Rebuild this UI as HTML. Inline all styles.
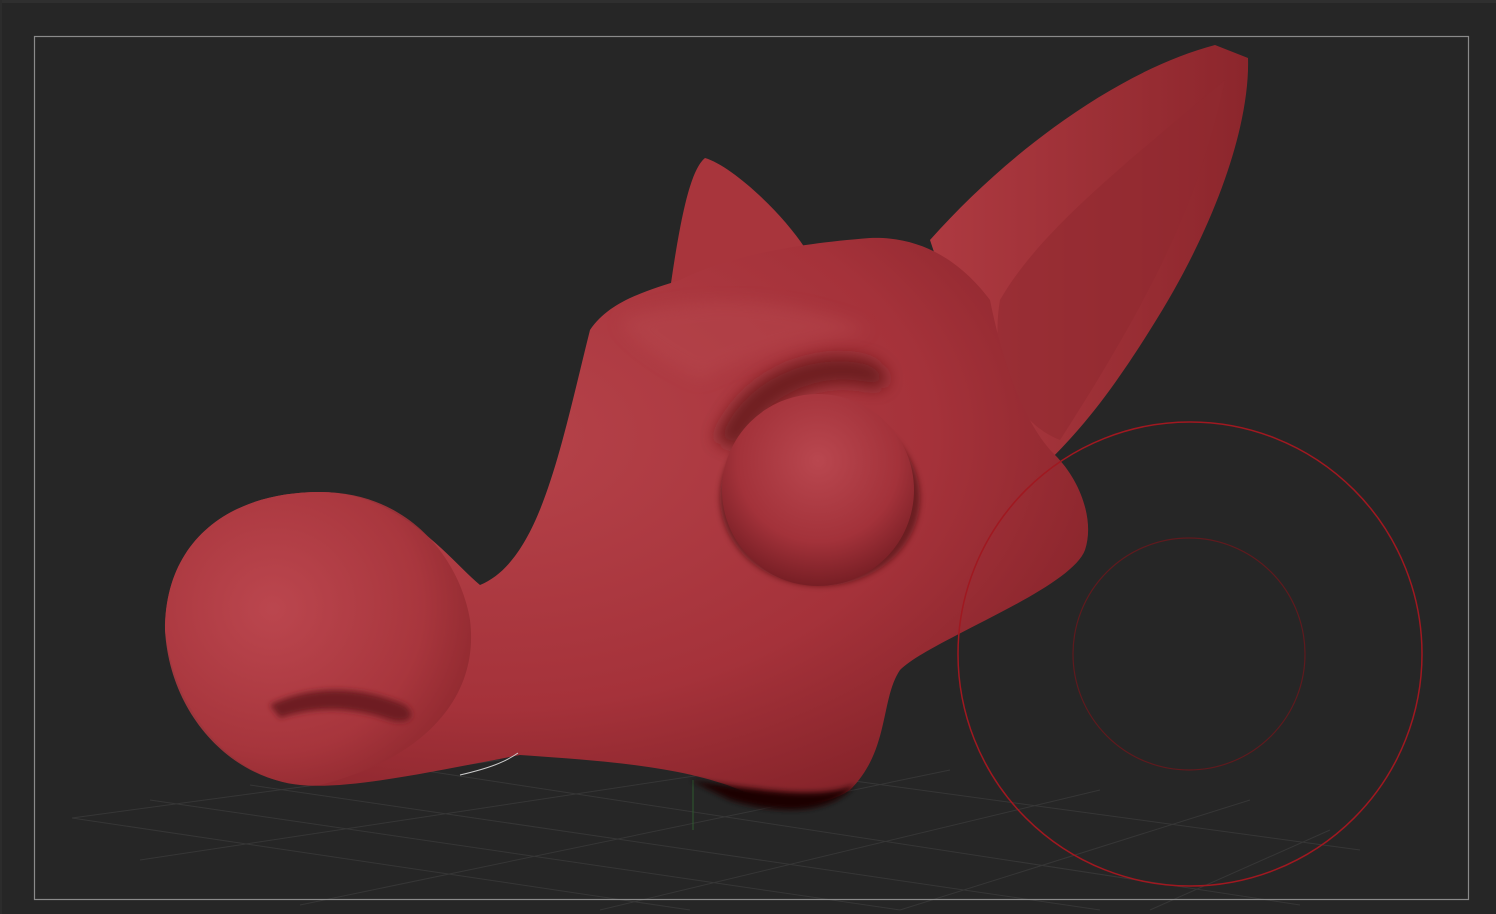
<!DOCTYPE html>
<html><head><style>
html,body{margin:0;padding:0;background:#262626;width:1496px;height:914px;overflow:hidden}
svg{display:block}
</style></head><body>
<svg width="1496" height="914" viewBox="0 0 1496 914" xmlns="http://www.w3.org/2000/svg">
<defs>
<radialGradient id="g1" cx="0.35" cy="0.35" r="0.8">
<stop offset="0" stop-color="#b6434a"/><stop offset="0.6" stop-color="#a5323a"/><stop offset="1" stop-color="#7e2026"/>
</radialGradient>
<radialGradient id="eye" cx="0.5" cy="0.35" r="0.7">
<stop offset="0" stop-color="#b9474f"/><stop offset="0.6" stop-color="#a3323a"/><stop offset="1" stop-color="#6e1a20"/>
</radialGradient>
<radialGradient id="nose" cx="0.35" cy="0.4" r="0.7">
<stop offset="0" stop-color="#bd4850"/><stop offset="0.7" stop-color="#a8363d"/><stop offset="1" stop-color="#8e282e"/>
</radialGradient>
<linearGradient id="ear" x1="0" y1="0" x2="1" y2="0">
<stop offset="0" stop-color="#ae3a41"/><stop offset="1" stop-color="#8c262c"/>
</linearGradient>
<filter id="bl" x="-20%" y="-20%" width="140%" height="140%"><feGaussianBlur stdDeviation="8"/></filter>
<filter id="bl2" x="-20%" y="-20%" width="140%" height="140%"><feGaussianBlur stdDeviation="3"/></filter>
</defs>
<rect width="1496" height="914" fill="#262626"/>
<rect width="1496" height="3" fill="#2f2f2f"/>
<rect width="2" height="914" fill="#2c2c2c"/>
<g stroke="#363636" stroke-width="1" fill="none">
<path d="M72 818 L690 910 M150 800 L900 910 M250 785 L1100 910 M420 770 L1300 905 M700 760 L1360 850 M72 818 L500 760 M140 860 L800 760 M300 905 L950 770 M600 910 L1100 790 M900 910 L1250 800 M1150 910 L1330 830"/>
</g>
<line x1="693" y1="780" x2="693" y2="830" stroke="#2f5a2f"/>
<rect x="34.5" y="36.5" width="1434" height="863" fill="none" stroke="#8a8a8a" stroke-width="1.2"/>
<!-- ear -->
<path d="M930 240 C1010 150 1120 70 1215 45 L1248 58 C1250 120 1220 220 1150 330 C1100 410 1070 440 1040 470 L960 330 Z" fill="url(#ear)"/>
<path d="M1000 300 C1040 230 1130 160 1225 80 C1200 200 1150 300 1060 440 C1010 420 990 360 1000 300 Z" fill="#912a30" opacity="0.6"/>
<!-- horn -->
<path d="M670 290 C680 220 690 170 705 158 C730 165 780 210 805 248 L760 280 Z" fill="#a8353c"/>
<!-- head -->
<path d="M165 630 C165 540 230 492 320 492 C400 492 450 560 480 585 C540 560 560 450 590 330 C610 300 650 290 680 280 C720 260 780 245 870 238 C920 236 960 260 990 300 C1000 350 1020 420 1055 455 C1080 480 1095 520 1085 550 C1070 590 930 640 900 670 C880 700 890 750 850 790 C820 810 780 805 740 790 C680 765 590 760 520 755 C440 770 350 790 300 785 C240 780 175 720 165 630 Z" fill="url(#g1)"/>
<!-- nose -->
<path d="M165 630 C165 540 230 492 320 492 C410 492 460 560 470 620 C480 700 420 760 320 785 C240 790 170 720 165 630 Z" fill="url(#nose)" opacity="0.9"/>
<path d="M270 705 C310 685 360 685 405 705 C420 718 405 725 390 720 C355 708 320 705 280 718 Z" fill="#6e1c22" filter="url(#bl2)"/>
<!-- eye socket shadow -->
<path d="M715 440 C740 370 820 345 870 360 C895 372 890 392 870 388 C820 375 765 400 740 450 Z" fill="#5a1519" opacity="0.75" filter="url(#bl)"/>
<ellipse cx="820" cy="498" rx="100" ry="88" fill="#3a0c10" opacity="0.55" filter="url(#bl2)"/>
<circle cx="818" cy="490" r="96" fill="url(#eye)"/>
<!-- brow highlight -->
<path d="M620 320 C700 290 800 300 870 330 C820 340 760 350 700 380 C660 360 630 340 620 320 Z" fill="#b84850" opacity="0.45" filter="url(#bl)"/>
<!-- bottom shadow -->
<path d="M690 780 C760 790 820 800 855 785 C830 815 780 815 730 800 Z" fill="#1a0405" filter="url(#bl2)"/>
<!-- brush circles -->
<circle cx="1190" cy="654" r="232" fill="none" stroke="#a01820" stroke-width="1.5"/>
<circle cx="1189" cy="654" r="116" fill="none" stroke="#5e1a1e" stroke-width="1.2"/>
<path d="M460 775 C490 768 505 762 518 753" stroke="#ccc" fill="none" stroke-width="1"/>
</svg>
</body></html>
